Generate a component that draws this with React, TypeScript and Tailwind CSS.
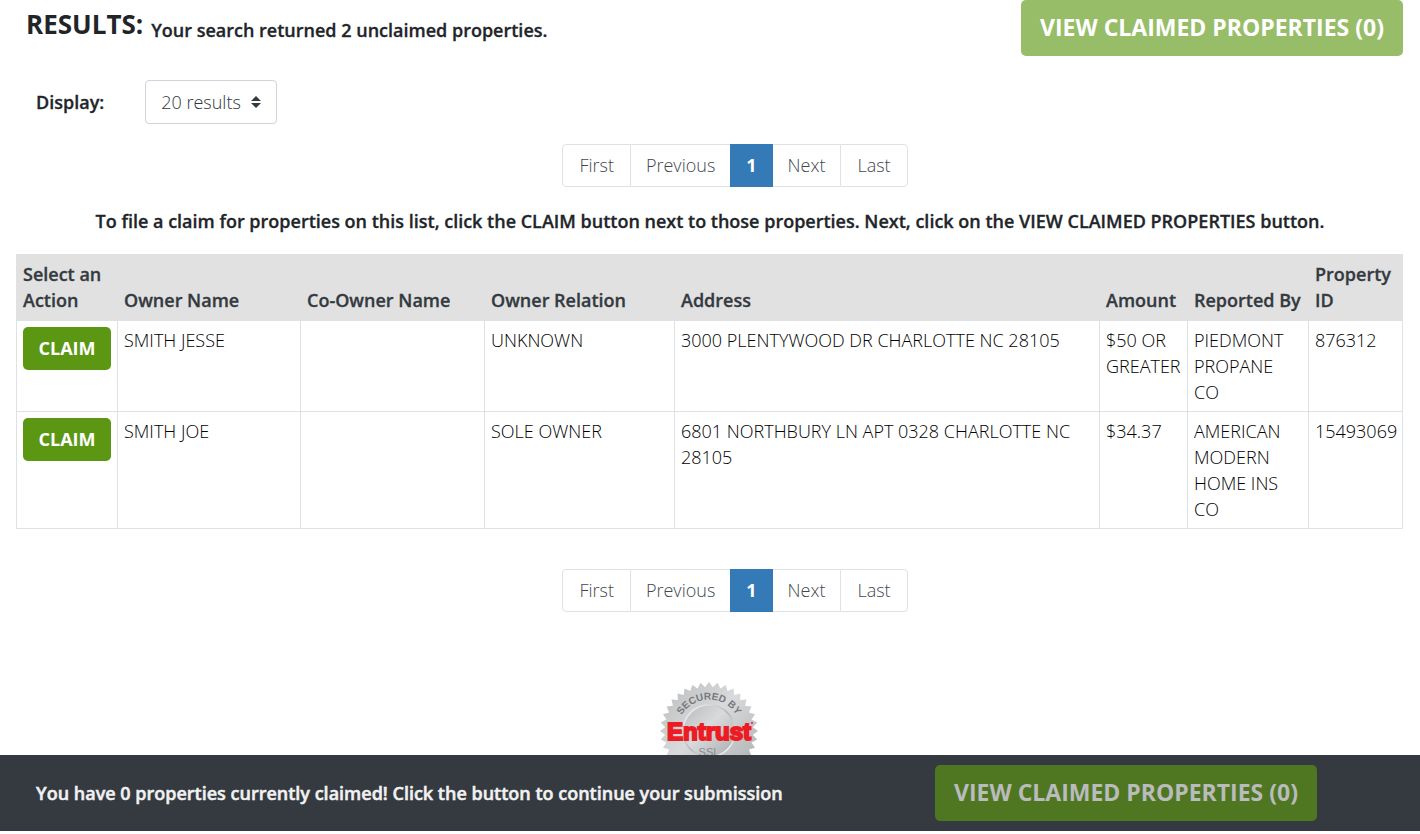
const properties = [
  {
    id: "876312",
    owner: "SMITH JESSE",
    coOwner: "",
    relation: "UNKNOWN",
    address: "3000 PLENTYWOOD DR CHARLOTTE NC 28105",
    amount: "$50 OR GREATER",
    reportedBy: "PIEDMONT PROPANE CO",
  },
  {
    id: "15493069",
    owner: "SMITH JOE",
    coOwner: "",
    relation: "SOLE OWNER",
    address: "6801 NORTHBURY LN APT 0328 CHARLOTTE NC 28105",
    amount: "$34.37",
    reportedBy: "AMERICAN MODERN HOME INS CO",
  },
];

const columns = [
  { label: "Select an Action", width: "w-[101px]" },
  { label: "Owner Name", width: "w-[183px]" },
  { label: "Co-Owner Name", width: "w-[184px]" },
  { label: "Owner Relation", width: "w-[190px]" },
  { label: "Address", width: "" },
  { label: "Amount", width: "w-[88px]" },
  { label: "Reported By", width: "w-[121px]" },
  { label: "Property ID", width: "w-[94px]" },
];

function Pagination({ label }: { label: string }) {
  const link = "flex items-center border-[#dee2e6] pb-[2px] font-light text-[#3f4850]";

  return (
    <nav aria-label={label} className="flex justify-center pl-[50px]">
      <div className="flex h-[43px]">
        <a href="#first" className={`${link} rounded-l border px-4`}>First</a>
        <a href="#previous" className={`${link} border-y px-[15px]`}>Previous</a>
        <a href="#1" aria-current="page" className="flex items-center bg-[#337ab7] px-4 pb-[2px] font-bold text-white">1</a>
        <a href="#next" className={`${link} border-y px-[15px]`}>Next</a>
        <a href="#last" className={`${link} rounded-r border px-4`}>Last</a>
      </div>
    </nav>
  );
}

// Silver seal with a toothed edge
function EntrustSeal() {
  const teeth = 36;
  const points = Array.from({ length: teeth * 2 }, (_, i) => {
    const angle = (Math.PI * i) / teeth - Math.PI / 2;
    const radius = i % 2 === 0 ? 49 : 44;
    return `${49 + radius * Math.cos(angle)},${49 + radius * Math.sin(angle)}`;
  }).join(" ");

  return (
    <svg width="100" height="100" viewBox="0 0 100 100" role="img" aria-label="Secured by Entrust SSL">
      <defs>
        <linearGradient id="silver" x1="0" y1="0" x2="1" y2="1">
          <stop offset="0" stopColor="#b9babb" />
          <stop offset="0.45" stopColor="#d9dadb" />
          <stop offset="1" stopColor="#a9aaad" />
        </linearGradient>
        <linearGradient id="ring" x1="0" y1="0" x2="1" y2="1">
          <stop offset="0" stopColor="#ffffff" />
          <stop offset="0.5" stopColor="#b5b6b8" />
          <stop offset="1" stopColor="#ffffff" />
        </linearGradient>
        <path id="arc" d="M 17.5 49 A 31.5 31.5 0 0 1 80.5 49" />
      </defs>
      <polygon points={points} fill="url(#silver)" />
      <circle cx="49" cy="49" r="26" fill="url(#silver)" stroke="url(#ring)" strokeWidth="1.5" />
      <text fontFamily="Liberation Sans" fontSize="10" fontWeight="700" fill="#77787b">
        <textPath href="#arc" startOffset="50%" textAnchor="middle">SECURED BY</textPath>
      </text>
      <text x="49" y="58" textAnchor="middle" fontFamily="Liberation Sans" fontSize="24" fontWeight="700" fill="#ed1c24" stroke="#ed1c24" strokeWidth="2">
        Entrust
      </text>
      <circle cx="92" cy="41" r="1" fill="#ed1c24" />
      <text x="49" y="74" textAnchor="middle" fontFamily="Liberation Sans" fontSize="11" fill="#8a8c8f">SSL</text>
    </svg>
  );
}

export default function App() {
  return (
    <div className="w-full bg-white font-['Open_Sans',sans-serif] text-[18px] leading-[26px] text-[#212529]">
      <main className="pb-20">
        {/* Results heading */}
        <header className="flex items-start justify-between pr-[17px] pl-[26px]">
          <div className="flex items-start gap-2 pt-2">
            <h1 className="text-[26px] leading-8 font-bold">RESULTS:</h1>
            <p className="pt-[9px] font-semibold [-webkit-text-stroke:0.3px]">Your search returned 2 unclaimed properties.</p>
          </div>
          <button disabled className="h-14 rounded-[5px] bg-[#97bd68] px-[19px] pb-[2px] text-[23px] font-bold text-white">
            VIEW CLAIMED PROPERTIES (0)
          </button>
        </header>

        {/* Page size */}
        <div className="mt-6 flex items-center gap-[41px] pl-9">
          <label htmlFor="display" className="font-semibold [-webkit-text-stroke:0.3px]">Display:</label>
          <div className="relative">
            <select id="display" className="h-11 w-[132px] appearance-none rounded border border-[#ced4da] bg-white pl-[15px] font-light text-[#2f363c]">
              <option>20 results</option>
            </select>
            <svg className="pointer-events-none absolute top-4 right-4" width="10" height="12" viewBox="0 0 10 12" fill="#343a40">
              <path d="M5 0 10 5H0zM5 12 0 7h10z" />
            </svg>
          </div>
        </div>

        <div className="mt-5">
          <Pagination label="Results pages" />
        </div>

        <p className="mt-[21px] text-center font-semibold [-webkit-text-stroke:0.3px]">
          To file a claim for properties on this list, click the CLAIM button next to those properties. Next, click on the VIEW CLAIMED PROPERTIES button.
        </p>

        {/* Results table */}
        <div className="mt-5 pr-[17px] pl-4">
          <table className="w-full table-fixed border-collapse text-left">
            <thead className="bg-[#e1e1e1] text-[#343a40]">
              <tr>
                {columns.map((column) => (
                  <th key={column.label} scope="col" className={`${column.width} border border-[#e1e1e1] border-b-[#dee2e6] px-[6px] pt-[6px] pb-[7px] align-bottom font-semibold [-webkit-text-stroke:0.3px]`}>
                    {column.label}
                  </th>
                ))}
              </tr>
            </thead>
            <tbody className="font-light text-black">
              {properties.map((property) => (
                <tr key={property.id} className="align-top [&>td]:border [&>td]:border-[#dee2e6] [&>td]:p-[6px]">
                  <td>
                    <button className="block w-[88px] rounded-[5px] bg-[#5c9713] pt-2 pb-[9px] font-bold text-white">CLAIM</button>
                  </td>
                  <td>{property.owner}</td>
                  <td>{property.coOwner}</td>
                  <td>{property.relation}</td>
                  <td>{property.address}</td>
                  <td>{property.amount}</td>
                  <td>{property.reportedBy}</td>
                  <td>{property.id}</td>
                </tr>
              ))}
            </tbody>
          </table>
        </div>

        <div className="mt-10">
          <Pagination label="Results pages, bottom" />
        </div>

        <div className="mt-[70px] flex justify-center">
          <EntrustSeal />
        </div>
      </main>

      {/* Claimed properties bar */}
      <div className="fixed inset-x-0 bottom-[3px] flex h-[76px] items-center justify-between bg-[#343a40] pr-[103px] pl-9">
        <p className="font-semibold text-[#f1f1f1] [-webkit-text-stroke:0.5px]">You have 0 properties currently claimed! Click the button to continue your submission</p>
        <button disabled className="h-14 rounded-[5px] bg-[#4f7722] px-[19px] pb-[2px] text-[23px] font-bold text-[#b9bbbc]">
          VIEW CLAIMED PROPERTIES (0)
        </button>
      </div>
    </div>
  );
}
